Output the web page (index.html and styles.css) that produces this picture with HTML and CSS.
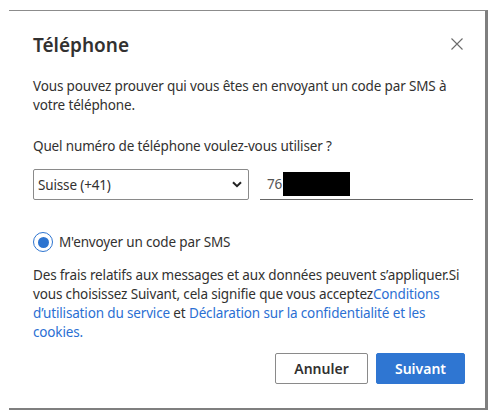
FILE: index.html
```html
<!DOCTYPE html>
<html lang="fr">
<head>
<meta charset="utf-8">
<title>Téléphone</title>
<link rel="stylesheet" href="styles.css">
</head>
<body>
<div class="dialog">
  <div class="header">
    <h1 class="title">Téléphone</h1>
    <svg class="close" width="12" height="12" viewBox="0 0 12 12"><path d="M0.5 0.5L11.5 11.5M11.5 0.5L0.5 11.5" stroke="#6b6b6b" stroke-width="1.1" fill="none"/></svg>
  </div>
  <p class="intro">Vous pouvez prouver qui vous êtes en envoyant un code par SMS à votre téléphone.</p>
  <p class="question">Quel numéro de téléphone voulez-vous utiliser ?</p>
  <div class="phone-row">
    <div class="select">
      <span>Suisse (+41)</span>
      <svg width="10" height="7" viewBox="0 0 10 7"><path d="M1 1.2L5 5.2L9 1.2" stroke="#222" stroke-width="2" fill="none"/></svg>
    </div>
    <div class="number">76<span class="redact"></span></div>
  </div>
  <label class="radio-row">
    <span class="radio"><span class="dot"></span></span>
    <span>M'envoyer un code par SMS</span>
  </label>
  <p class="legal">Des frais relatifs aux messages et aux données peuvent s’appliquer.Si vous choisissez Suivant, cela signifie que vous acceptez<a href="#">Conditions d’utilisation du service</a> et <a href="#">Déclaration sur la confidentialité et les cookies.</a></p>
  <div class="actions">
    <button class="btn btn-secondary">Annuler</button>
    <button class="btn btn-primary">Suivant</button>
  </div>
</div>
</body>
</html>
```

FILE: styles.css
```css
html, body {
  margin: 0;
  padding: 0;
  background: #ffffff;
}
body {
  font-family: "Noto Sans", "Open Sans", sans-serif;
  color: #323130;
  padding: 10px 0 0 9px;
}
.dialog {
  border-top: 1px solid #8c8c8c;
  border-right: 3px solid #7f7f7f;
  border-bottom: 2px solid #7f7f7f;
  display: flex;
  flex-direction: column;
  padding-left: 24px;
  padding-right: 12px;
  box-sizing: border-box;
  width: 479px;
  height: 400px;
}
.header {
  display: flex;
  justify-content: space-between;
  align-items: center;
  padding-top: 21px;
  padding-right: 10px;
}
.title {
  margin: 0;
  font-size: 19px;
  font-weight: 600;
  line-height: 26px;
}
.close {
  display: block;
  margin-top: -3px;
}
.intro,
.question,
.legal,
.radio-row,
.select,
.number {
  font-size: 13.5px;
  letter-spacing: -0.15px;
}
.intro {
  margin: 19px 0 0 0;
  line-height: 19px;
}
.question {
  margin: 22px 0 0 0;
  line-height: 19px;
}
.phone-row {
  display: flex;
  gap: 11px;
  margin-top: 13px;
  align-items: stretch;
}
.select {
  width: 216px;
  height: 31px;
  box-sizing: border-box;
  border: 1px solid #8a8a8a;
  border-radius: 2px;
  display: flex;
  align-items: center;
  justify-content: space-between;
  padding: 0 6px 0 4px;
}
.number {
  flex: 1;
  height: 31px;
  box-sizing: border-box;
  border-bottom: 1px solid #666;
  display: flex;
  align-items: center;
  padding-left: 7px;
  color: #555;
}
.redact {
  display: inline-block;
  width: 67px;
  height: 24px;
  background: #000;
  margin-left: 1px;
}
.radio-row {
  display: flex;
  align-items: center;
  gap: 6px;
  margin-top: 32px;
}
.radio {
  width: 20px;
  height: 20px;
  box-sizing: border-box;
  border: 1.5px solid #2d74d0;
  border-radius: 50%;
  display: flex;
  align-items: center;
  justify-content: center;
}
.dot {
  width: 11px;
  height: 11px;
  border-radius: 50%;
  background: #2d74d0;
}
.legal {
  margin: 14px 0 0 0;
  line-height: 19px;
}
.legal a {
  color: #2b6fd3;
  text-decoration: none;
}
.actions {
  display: flex;
  justify-content: flex-end;
  gap: 8px;
  margin-top: 11px;
  padding-right: 8px;
}
.btn {
  height: 31px;
  border-radius: 2px;
  font-family: inherit;
  font-size: 14px;
  font-weight: 600;
  padding: 0;
  box-sizing: border-box;
}
.btn-secondary {
  width: 93px;
  background: #fff;
  border: 1px solid #8a8a8a;
  color: #323130;
}
.btn-primary {
  width: 89px;
  background: #2f76d2;
  border: 1px solid #2f76d2;
  color: #fff;
}
```
